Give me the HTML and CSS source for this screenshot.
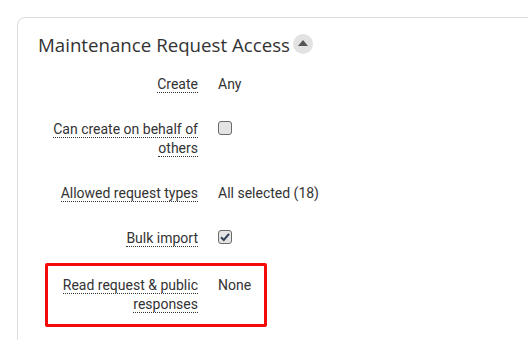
FILE: index.html
```html
<!DOCTYPE html>
<html lang="en">
<head>
    <meta charset="UTF-8">
    <title>Maintenance Request Access</title>
    <link rel="stylesheet" href="styles.css">
</head>
<body>

    <!-- Access settings card -->
    <div class="card">
        <h2 class="card-title">
            Maintenance Request Access
            <button class="collapse-btn" aria-label="Collapse">
                <svg width="10" height="6" viewBox="0 0 10 6"><path d="M0 6 L5 0 L10 6 Z" fill="#555"/></svg>
            </button>
        </h2>

        <div class="field">
            <div class="field-label"><span>Create</span></div>
            <div class="field-value">Any</div>
        </div>

        <div class="field">
            <div class="field-label"><span>Can create on behalf of others</span></div>
            <div class="field-value"><span class="checkbox"></span></div>
        </div>

        <div class="field">
            <div class="field-label"><span>Allowed request types</span></div>
            <div class="field-value">All selected (18)</div>
        </div>

        <div class="field">
            <div class="field-label"><span>Bulk import</span></div>
            <div class="field-value">
                <span class="checkbox checked">
                    <svg width="12" height="12" viewBox="0 0 12 12"><path d="M2 6.2 L4.8 9 L10 2.8" fill="none" stroke="#34425a" stroke-width="2"/></svg>
                </span>
            </div>
        </div>

        <div class="field highlight">
            <div class="field-label"><span>Read request &amp; public responses</span></div>
            <div class="field-value">None</div>
        </div>
    </div>

</body>
</html>
```

FILE: styles.css
```css
* {
    margin: 0;
    padding: 0;
    box-sizing: border-box;
}

body {
    font-family: Roboto, Arial, sans-serif;
    font-size: 14px;
    color: #333;
    background-color: #fff;
    padding: 17px 0 0 17px;
    overflow: hidden;
}

/* Card */
.card {
    width: 560px;
    min-height: 400px;
    border: 1px solid #ddd;
    border-radius: 8px 0 0 0;
    padding: 13px 20px 0 20px;
}

.card-title {
    display: flex;
    align-items: center;
    font-family: "Open Sans", Arial, sans-serif;
    font-size: 18.7px;
    font-weight: normal;
    line-height: 28px;
    color: #333;
    margin-bottom: 3px;
}

.collapse-btn {
    display: flex;
    align-items: center;
    justify-content: center;
    width: 20px;
    height: 20px;
    margin-left: 3px;
    margin-top: -3px;
    border: none;
    border-radius: 50%;
    background-color: #e2e2e2;
    padding-bottom: 1px;
}

/* Field rows */
.field {
    display: flex;
    gap: 20px;
    width: fit-content;
    margin-left: 7px;
    padding: 10px 0;
    border: 3px solid transparent;
    line-height: 19px;
}

.field-label {
    width: 150px;
    text-align: right;
}

.field-label span {
    border-bottom: 1px dotted #333;
}

.field-value {
    color: #333;
}

.field.highlight {
    width: 222px;
    margin-top: 2px;
    border-color: #f50a0a;
    border-radius: 2px;
}

/* Checkbox */
.checkbox {
    display: flex;
    align-items: center;
    justify-content: center;
    width: 14px;
    height: 14px;
    margin-top: 1px;
    border: 1px solid #6a6a6a;
    border-radius: 3px;
    background-color: #e4e4e4;
}
```
